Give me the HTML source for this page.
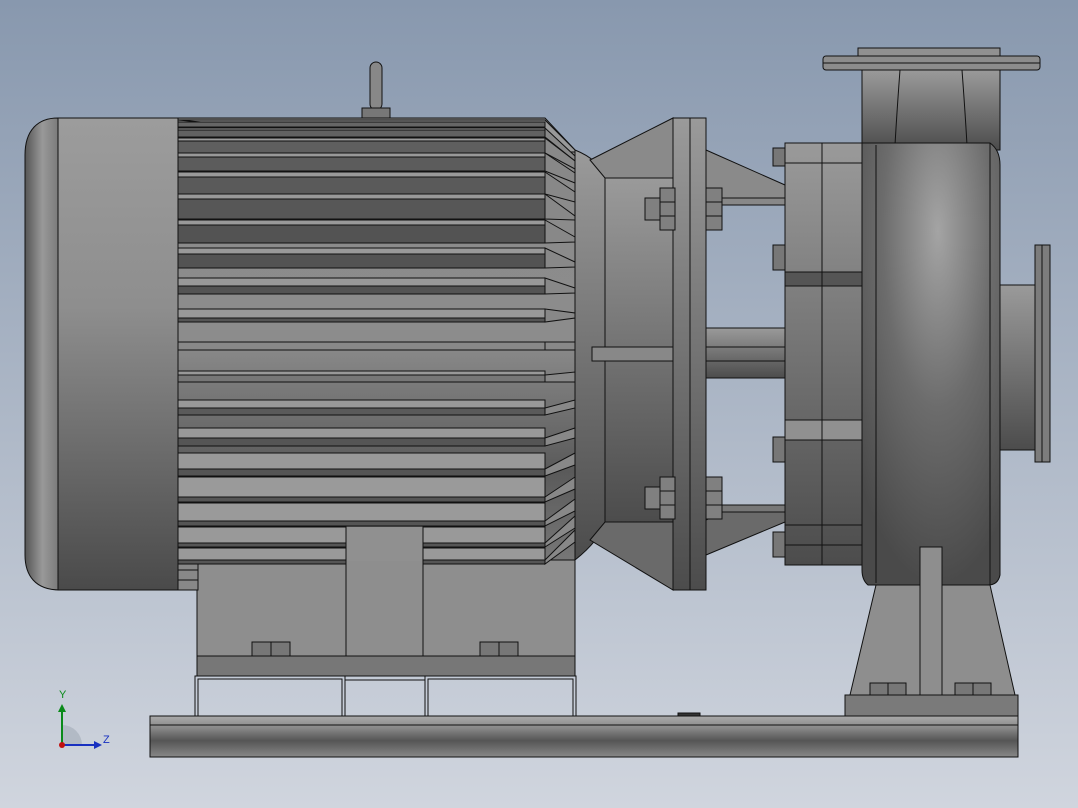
<!DOCTYPE html>
<html><head><meta charset="utf-8"><style>
html,body{margin:0;padding:0;width:1078px;height:808px;overflow:hidden}
svg{display:block}
</style></head><body>
<svg width="1078" height="808" viewBox="0 0 1078 808" xmlns="http://www.w3.org/2000/svg">
<defs>
<linearGradient id="bg" x1="0" y1="0" x2="0" y2="1"><stop offset="0" stop-color="#8898ae"/><stop offset="1" stop-color="#d0d5de"/></linearGradient>
<linearGradient id="cap" x1="0" y1="0" x2="0" y2="1"><stop offset="0" stop-color="#9c9c9c"/><stop offset=".4" stop-color="#8e8e8e"/><stop offset="1" stop-color="#4a4a4a"/></linearGradient>
<linearGradient id="capL" x1="0" y1="0" x2="1" y2="0"><stop offset="0" stop-color="#555"/><stop offset=".5" stop-color="#999"/><stop offset="1" stop-color="#777"/></linearGradient>
<linearGradient id="body" x1="0" y1="0" x2="0" y2="1"><stop offset="0" stop-color="#8a8a8a"/><stop offset=".5" stop-color="#8c8c8c"/><stop offset=".8" stop-color="#5a5a5a"/><stop offset="1" stop-color="#777"/></linearGradient>
<linearGradient id="vert" x1="0" y1="0" x2="0" y2="1"><stop offset="0" stop-color="#9a9a9a"/><stop offset="1" stop-color="#4c4c4c"/></linearGradient>
<linearGradient id="base" x1="0" y1="0" x2="0" y2="1"><stop offset="0" stop-color="#aaa"/><stop offset=".3" stop-color="#888"/><stop offset=".6" stop-color="#555"/><stop offset="1" stop-color="#888"/></linearGradient>
<radialGradient id="vol" cx=".55" cy=".2" r=".8"><stop offset="0" stop-color="#a4a4a4"/><stop offset=".5" stop-color="#6c6c6c"/><stop offset="1" stop-color="#4a4a4a"/></radialGradient>
</defs>
<rect width="1078" height="808" fill="url(#bg)"/>
<g stroke="#111" stroke-width="1">
<rect x="150" y="716" width="868" height="41" fill="url(#base)"/>
<line x1="150" y1="725" x2="1018" y2="725"/>
<rect x="678" y="713" width="22" height="3" fill="#333"/>
<g fill="none">
<rect x="195" y="676" width="150" height="40"/><rect x="198" y="679" width="144" height="37"/>
<rect x="425" y="676" width="151" height="40"/><rect x="428" y="679" width="145" height="37"/>
<rect x="345" y="676" width="80" height="4"/>
</g>
<rect x="197" y="560" width="378" height="116" fill="#8e8e8e"/>
<rect x="197" y="656" width="378" height="20" fill="#777"/>
<line x1="346" y1="527" x2="346" y2="656"/><line x1="423" y1="527" x2="423" y2="656"/>
<rect x="252" y="642" width="19" height="14" fill="#777"/><rect x="271" y="642" width="19" height="14" fill="#777"/>
<rect x="480" y="642" width="19" height="14" fill="#777"/><rect x="499" y="642" width="19" height="14" fill="#777"/>
<path d="M58,118 L58,590 L60,590 C35,590 25,575 25,555 L25,155 C25,130 38,118 58,118 Z" fill="url(#capL)"/>
<rect x="58" y="118" width="120" height="472" fill="url(#cap)"/>
<line x1="58" y1="118" x2="58" y2="590"/>
<path d="M178,118 L545,118 L575,150 L575,560 L178,560 Z" fill="url(#body)"/>
<rect x="178" y="560" width="20" height="30" fill="#888"/>
<line x1="178" y1="570" x2="198" y2="570"/><line x1="178" y1="580" x2="198" y2="580"/>
<rect x="346" y="527" width="77" height="34" fill="#909090" stroke="none"/>
</g>
<g stroke="#111" stroke-width="1">
<path fill="#999" d="M178,120h367l30,30v2h-30z"/>
<rect x="178" y="122" width="367" height="5" fill="#666"/>
<rect x="178" y="128" width="367" height="2" fill="#999"/><rect x="178" y="130" width="367" height="7" fill="#616161"/>
<rect x="178" y="138" width="367" height="3" fill="#999"/><rect x="178" y="141" width="367" height="12" fill="#5f5f5f"/>
<rect x="178" y="153" width="367" height="4" fill="#999"/><rect x="178" y="157" width="367" height="14" fill="#5c5c5c"/>
<rect x="178" y="172" width="367" height="5" fill="#999"/><rect x="178" y="177" width="367" height="17" fill="#5a5a5a"/>
<rect x="178" y="194" width="367" height="5" fill="#999"/><rect x="178" y="199" width="367" height="20" fill="#575757"/>
<rect x="178" y="220" width="367" height="5" fill="#999"/><rect x="178" y="225" width="367" height="18" fill="#535353"/>
<rect x="178" y="248" width="367" height="6" fill="#999"/><rect x="178" y="254" width="367" height="14" fill="#535353"/>
<rect x="178" y="278" width="367" height="8" fill="#999"/><rect x="178" y="286" width="367" height="8" fill="#545454"/>
<rect x="178" y="309" width="367" height="9" fill="#999"/><rect x="178" y="318" width="367" height="4" fill="#555"/>
<rect x="178" y="342" width="367" height="8" fill="#888"/>
<rect x="178" y="371" width="367" height="4" fill="#999"/><rect x="178" y="375" width="367" height="7" fill="#777"/>
<rect x="178" y="400" width="367" height="8" fill="#999"/><rect x="178" y="408" width="367" height="7" fill="#5a5a5a"/>
<rect x="178" y="428" width="367" height="10" fill="#999"/><rect x="178" y="438" width="367" height="8" fill="#555"/>
<rect x="178" y="453" width="367" height="16" fill="#999"/><rect x="178" y="469" width="367" height="7" fill="#555"/>
<rect x="178" y="477" width="367" height="20" fill="#9a9a9a"/><rect x="178" y="497" width="367" height="5" fill="#555"/>
<rect x="178" y="503" width="367" height="18" fill="#9a9a9a"/><rect x="178" y="521" width="367" height="5" fill="#555"/>
<rect x="178" y="527" width="168" height="16" fill="#999"/><rect x="423" y="527" width="122" height="16" fill="#999"/>
<rect x="178" y="543" width="168" height="4" fill="#555"/><rect x="423" y="543" width="122" height="4" fill="#555"/>
<rect x="178" y="548" width="168" height="12" fill="#999"/><rect x="423" y="548" width="122" height="12" fill="#999"/>
<rect x="178" y="560" width="168" height="4" fill="#555"/><rect x="423" y="560" width="122" height="4" fill="#555"/>
<g fill="#888">
<path d="M545,128l30,28v5l-30,-24z"/><path d="M545,138l30,23v8l-30,-16z"/>
<path d="M545,153l30,20v10l-30,-12z"/><path d="M545,172l30,20v10l-30,-8z"/>
<path d="M545,194l30,22v4l-30,-1z"/><path d="M545,220l30,17v5l-30,1z"/>
<path d="M545,248l30,14v5l-30,1z"/><path d="M545,278l30,10v5l-30,1z"/>
<path d="M545,309l30,4v5l-30,4z"/><path d="M545,342h30v8h-30z"/>
<path d="M545,375l30,-3v10h-30z"/><path d="M545,408l30,-8v8l-30,7z"/>
<path d="M545,438l30,-10v10l-30,8z"/><path d="M545,469l30,-16v12l-30,11z"/>
<path d="M545,497l30,-20v12l-30,13z"/><path d="M545,521l30,-22v12l-30,15z"/>
<path d="M545,543l30,-27v12l-30,19z"/><path d="M545,560l30,-30v12l-30,22z"/>
</g>
<line x1="575" y1="150" x2="575" y2="560"/>
<rect x="370" y="62" width="12" height="48" rx="6" fill="#888"/>
<rect x="362" y="108" width="28" height="10" fill="#777"/>
<path d="M575,150 Q600,160 605,178 L605,522 Q600,540 575,560 Z" fill="url(#vert)"/>
<path d="M590,160 L673,118 L673,178 L605,178 Z" fill="#8a8a8a"/>
<path d="M590,540 L605,522 L673,522 L673,590 Z" fill="#6a6a6a"/>
<rect x="605" y="178" width="68" height="344" fill="url(#vert)"/>
<rect x="592" y="347" width="81" height="14" fill="#888"/>
<rect x="673" y="118" width="33" height="472" fill="url(#vert)"/>
<line x1="690" y1="118" x2="690" y2="590"/>
<path d="M706,150 L785,185 L785,198 L722,198 L706,190 Z" fill="#8a8a8a"/>
<path d="M706,555 L785,522 L785,512 L722,512 L706,520 Z" fill="#6a6a6a"/>
<rect x="722" y="198" width="63" height="7" fill="#888"/><rect x="722" y="505" width="63" height="7" fill="#777"/>
<rect x="706" y="328" width="79" height="50" fill="url(#vert)"/>
<line x1="706" y1="347" x2="785" y2="347"/><line x1="706" y1="361" x2="785" y2="361"/>
<g fill="#808080">
<rect x="645" y="198" width="15" height="22"/><rect x="660" y="188" width="15" height="42"/>
<rect x="706" y="188" width="16" height="42"/>
<rect x="645" y="487" width="15" height="22"/><rect x="660" y="477" width="15" height="42"/>
<rect x="706" y="477" width="16" height="42"/>
</g>
<line x1="660" y1="202" x2="675" y2="202"/><line x1="660" y1="216" x2="675" y2="216"/>
<line x1="706" y1="202" x2="722" y2="202"/><line x1="706" y1="216" x2="722" y2="216"/>
<line x1="660" y1="491" x2="675" y2="491"/><line x1="660" y1="505" x2="675" y2="505"/>
<line x1="706" y1="491" x2="722" y2="491"/><line x1="706" y1="505" x2="722" y2="505"/>
<rect x="785" y="143" width="77" height="422" fill="url(#vert)"/>
<rect x="785" y="272" width="77" height="14" fill="#555"/>
<rect x="785" y="420" width="77" height="20" fill="#909090"/>
<line x1="822" y1="143" x2="822" y2="565"/>
<line x1="785" y1="163" x2="862" y2="163"/><line x1="785" y1="272" x2="862" y2="272"/>
<line x1="785" y1="286" x2="862" y2="286"/><line x1="785" y1="420" x2="862" y2="420"/>
<line x1="785" y1="525" x2="862" y2="525"/><line x1="785" y1="545" x2="862" y2="545"/>
<g fill="#777">
<rect x="773" y="148" width="12" height="18"/><rect x="773" y="245" width="12" height="25"/>
<rect x="773" y="437" width="12" height="25"/><rect x="773" y="532" width="12" height="25"/>
</g>
<rect x="862" y="70" width="138" height="80" fill="url(#vert)"/>
<path d="M900,70 Q897,110 895,145 M962,70 Q965,110 967,145" fill="none"/>
<rect x="823" y="56" width="217" height="14" rx="3" fill="#8c8c8c"/>
<line x1="823" y1="63" x2="1040" y2="63"/>
<rect x="858" y="48" width="142" height="8" fill="#909090"/>
<rect x="1000" y="285" width="35" height="165" fill="url(#vert)"/>
<rect x="1035" y="245" width="15" height="217" fill="#7c7c7c"/>
<line x1="1042" y1="245" x2="1042" y2="462"/>
<path d="M862,143 L990,143 Q1000,150 1000,165 L1000,575 Q998,585 988,585 L868,585 Q862,580 862,570 Z" fill="url(#vol)"/>
<line x1="876" y1="145" x2="876" y2="583"/><line x1="990" y1="143" x2="990" y2="585"/>
<path d="M876,585 L990,585 L1015,695 L850,695 Z" fill="#8e8e8e"/>
<rect x="920" y="547" width="22" height="148" fill="#8e8e8e"/>
<rect x="845" y="695" width="173" height="21" fill="#7a7a7a"/>
<g fill="#777"><rect x="870" y="683" width="18" height="12"/><rect x="888" y="683" width="18" height="12"/>
<rect x="955" y="683" width="18" height="12"/><rect x="973" y="683" width="18" height="12"/></g>
</g>
<g font-family="Liberation Sans, sans-serif" font-size="11">
<path d="M62,745 L62,725 A20,20 0 0 1 82,745 Z" fill="#a8b0bc" opacity=".7"/>
<line x1="62" y1="745" x2="62" y2="710" stroke="#0a8a1a" stroke-width="2"/>
<path d="M58,712 L62,704 L66,712 Z" fill="#0a8a1a"/>
<line x1="62" y1="745" x2="96" y2="745" stroke="#1830c0" stroke-width="2"/>
<path d="M94,741 L102,745 L94,749 Z" fill="#1830c0"/>
<circle cx="62" cy="745" r="3" fill="#c01010"/>
<text x="59" y="698" fill="#0a8a1a">Y</text>
<text x="103" y="743" fill="#1830c0">Z</text>
</g>
</svg>
</body></html>
